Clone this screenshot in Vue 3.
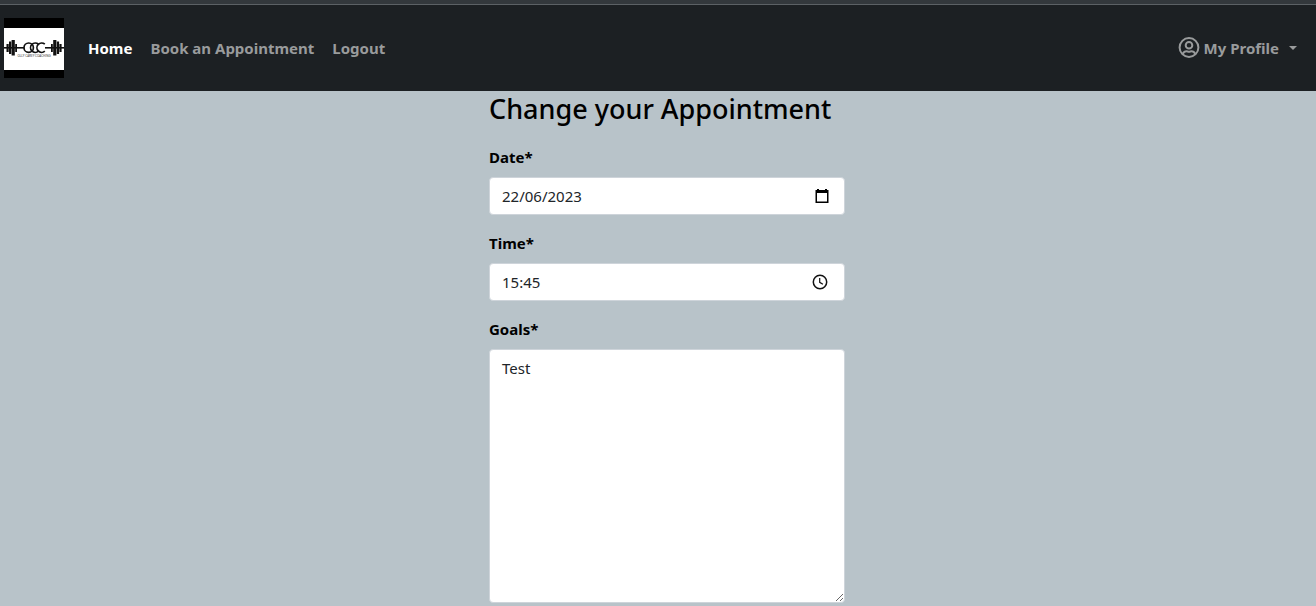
<script setup>
import { ref } from 'vue'

const links = [
  { label: 'Home', active: true },
  { label: 'Book an Appointment', active: false },
  { label: 'Logout', active: false },
]
const date = ref('22/06/2023')
const time = ref('15:45')
const goals = ref('Test')
</script>

<template>
  <div class="page">
    <header class="navbar">
      <a class="brand" href="#" aria-label="Olly Carey Coaching">
        <svg viewBox="0 0 60 60" width="60" height="60">
          <rect width="60" height="60" fill="#000" />
          <rect y="10" width="60" height="42" fill="#fff" />
          <g fill="#111">
            <rect y="29" width="20" height="1.6" />
            <rect x="41" y="29" width="19" height="1.6" />
            <rect x="2.5" y="26" width="2.2" height="8" />
            <rect x="5" y="23.5" width="2.3" height="12.5" />
            <rect x="7.6" y="22" width="3.2" height="15.5" />
            <rect x="11.2" y="26" width="1.8" height="8" />
            <rect x="47" y="26" width="1.8" height="8" />
            <rect x="49.2" y="22" width="3.2" height="15.5" />
            <rect x="52.8" y="23.5" width="2.3" height="12.5" />
            <rect x="55.4" y="26" width="2.2" height="8" />
          </g>
          <g fill="none" stroke="#111" stroke-width="1.7">
            <circle cx="24.7" cy="29.7" r="4.7" />
            <path d="M34.4 26.2a4.7 4.7 0 1 0 0 7" />
            <path d="M40.8 26.2a4.7 4.7 0 1 0 0 7" />
          </g>
          <text x="30" y="39" text-anchor="middle" class="brand-text">OLLY CAREY COACHING</text>
        </svg>
      </a>
      <nav class="links">
        <a v-for="l in links" :key="l.label" href="#" class="link" :class="{ active: l.active }">{{ l.label }}</a>
      </nav>
      <button type="button" class="link profile">
        <svg viewBox="0 0 22 22" width="22" height="22" fill="none" stroke="currentColor" stroke-width="2">
          <circle cx="11" cy="10.5" r="9.4" />
          <circle cx="11" cy="8.2" r="3.3" />
          <path d="M4.8 16.8c1-2 2.4-2.5 3.7-2.5.8 0 1.5.4 2.5.4s1.7-.4 2.5-.4c1.3 0 2.7.5 3.7 2.5" />
        </svg>
        <span>My Profile</span>
        <i class="caret"></i>
      </button>
    </header>

    <main class="content">
      <form class="form" @submit.prevent>
        <h1>Change your Appointment</h1>
        <div class="field">
          <label for="date">Date*</label>
          <div class="control">
            <input id="date" v-model="date" type="text" />
            <button type="button" class="picker" aria-label="Choose date">
              <svg viewBox="0 0 16 16" width="16" height="16">
                <path d="M3 1h2v1h6V1h2v1h1.5v13h-13V2H3zM3 5v8.5h10V5z" fill="#000" fill-rule="evenodd" />
              </svg>
            </button>
          </div>
        </div>
        <div class="field">
          <label for="time">Time*</label>
          <div class="control">
            <input id="time" v-model="time" type="text" />
            <button type="button" class="picker time" aria-label="Choose time">
              <svg viewBox="0 0 16 16" width="16" height="16" fill="none" stroke="#111">
                <circle cx="8" cy="8" r="6.7" stroke-width="1.5" />
                <path d="M7.7 4v4.3l3.2 2" stroke-width="1.2" />
              </svg>
            </button>
          </div>
        </div>
        <div class="field">
          <label for="goals">Goals*</label>
          <textarea id="goals" v-model="goals" rows="10"></textarea>
        </div>
      </form>
    </main>
  </div>
</template>

<style>
body {
  margin: 0;
  background: #b8c3c9;
}
</style>

<style scoped>
.page,
.page * {
  box-sizing: border-box;
}
.page {
  font-family: "Noto Sans", "Open Sans", sans-serif;
  font-size: 15px;
  line-height: 24px;
  color: #000;
}
.navbar {
  display: flex;
  align-items: center;
  height: 91px;
  padding: 5px 19px 0 4px;
  background: linear-gradient(#33383c 0 4px, #5c6165 4px 5px, #1c2023 5px);
}
.brand {
  display: block;
  height: 60px;
  margin-right: 24px;
}
.brand svg {
  display: block;
}
.brand-text {
  font-family: "Open Sans", sans-serif;
  font-size: 3px;
  font-weight: 400;
  fill: #222;
}
.links {
  display: flex;
  gap: 18px;
}
.link {
  color: #999b9c;
  font-weight: 700;
  text-decoration: none;
}
.link.active {
  color: #fff;
}
.profile {
  display: flex;
  align-items: center;
  gap: 4px;
  margin-left: auto;
  padding: 0;
  border: 0;
  background: none;
  font-family: inherit;
  font-size: inherit;
  line-height: inherit;
}
.caret {
  margin-left: 6px;
  border: 4px solid transparent;
  border-top-color: currentColor;
  border-bottom: 0;
}
.content {
  display: flex;
  justify-content: center;
  padding-left: 18px;
}
.form {
  width: 100%;
  max-width: 356px;
}
h1 {
  margin: 0 0 18px;
  font-size: 27px;
  font-weight: 500;
  line-height: 36px;
}
.field {
  margin-bottom: 16px;
}
.field:last-child {
  margin-bottom: 0;
}
label {
  display: block;
  margin-bottom: 8px;
  font-weight: 700;
}
.control {
  display: flex;
  align-items: center;
  height: 38px;
  padding-right: 14px;
  border: 1px solid #ced4da;
  border-radius: 4px;
  background: #fff;
}
input {
  flex: 1;
  min-width: 0;
  padding: 6px 12px;
  border: 0;
  outline: 0;
  background: none;
  font: inherit;
  color: #212529;
}
.picker {
  display: flex;
  padding: 0;
  border: 0;
  background: none;
}
.picker.time {
  margin-right: 2px;
}
textarea {
  display: block;
  width: 100%;
  height: 254px;
  padding: 6px 12px;
  border: 1px solid #ced4da;
  border-radius: 4px;
  outline: 0;
  background: #fff;
  font: inherit;
  color: #212529;
  resize: vertical;
}
</style>
